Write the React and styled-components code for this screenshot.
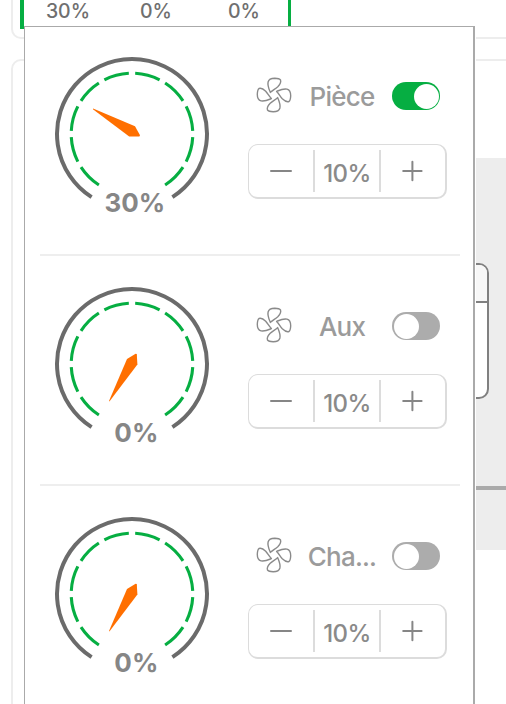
import React, { useState } from "react";
import styled, { createGlobalStyle } from "styled-components";

const GlobalStyle = createGlobalStyle`
  * {
    box-sizing: border-box;
  }

  body {
    margin: 0;
    background: #fff;
    font-family: Inter, "Liberation Sans", sans-serif;
  }
`;

const fans = [
  { name: "Pièce", value: 30, min: 10, on: true },
  { name: "Aux", value: 0, min: 10, on: false },
  { name: "Cha...", value: 0, min: 10, on: false },
];

const needles = {
  0: "-22.6,37.6 5.4,0.4 4.8,-10 3.6,-10.2 -5,-5 -23,37",
  30: "-38.9,-25.4 3,-7.8 8,1.2 7.4,2.6 -2.8,2.6 -39.1,-24.8",
};

const point = (r, deg) => {
  const a = (deg * Math.PI) / 180;
  return `${(r * Math.sin(a)).toFixed(2)} ${(-r * Math.cos(a)).toFixed(2)}`;
};

const arc = (r, from, to) =>
  `M${point(r, from)} A${r} ${r} 0 ${to - from > 180 ? 1 : 0} 1 ${point(r, to)}`;

const segments = [-147, -117, -87, -57, -27, 3, 33, 63, 93, 123];

const Gauge = ({ value }) => (
  <GaugeSvg viewBox="-78 -78 156 164">
    <path d={arc(75, -147.4, 147.4)} stroke="#6b6b6b" strokeWidth="4" />
    {segments.map((deg) => (
      <path key={deg} d={arc(60.8, deg, deg + 24)} stroke="#06ae42" strokeWidth="3.1" />
    ))}
    <polygon points={needles[value]} fill="#ff6f00" />
    <GaugeText x={value ? 2.9 : 4.3} y="77.8">
      {value}%
    </GaugeText>
  </GaugeSvg>
);

const blade = "M-3.6 -2.6 C-4.6 -5 -6.7 -9 -5.9 -13 C-5.2 -15.8 -2.5 -16.7 0.8 -16.7 C3 -16.6 5.8 -16 6.5 -15 C7 -13.6 6.2 -10.8 3.8 -8.3 C1 -5.9 -1.6 -4.8 -3.6 -2.6 Z";

const FanIcon = () => (
  <FanSvg viewBox="-18 -18 36 36">
    {[0, 90, 180, 270].map((deg) => (
      <path key={deg} d={blade} transform={`rotate(${deg})`} />
    ))}
  </FanSvg>
);

const FanRow = ({ fan }) => {
  const [on, setOn] = useState(fan.on);
  const [speed, setSpeed] = useState(fan.min);

  return (
    <Row>
      <Gauge value={fan.value} />
      <Controls>
        <Header>
          <FanIcon />
          <Name>{fan.name}</Name>
          <Toggle $on={on} onClick={() => setOn(!on)}>
            <Knob />
          </Toggle>
        </Header>
        <Stepper>
          <StepButton onClick={() => setSpeed(Math.max(0, speed - 10))}>
            <svg width="24" height="24" viewBox="0 0 24 24">
              <path d="M2 12h20" />
            </svg>
          </StepButton>
          <Speed>{speed}%</Speed>
          <StepButton onClick={() => setSpeed(Math.min(100, speed + 10))}>
            <svg width="24" height="24" viewBox="0 0 24 24">
              <path d="M2.2 12h18.4M11.4 2.8v18.4" />
            </svg>
          </StepButton>
        </Stepper>
      </Controls>
    </Row>
  );
};

const App = () => (
  <Screen>
    <GlobalStyle />
    <TopCard>
      <Summary>
        {fans.map((fan) => (
          <span key={fan.name}>{fan.value}%</span>
        ))}
      </Summary>
    </TopCard>
    <MainCard>
      <Diagram>
        <Device>
          <DeviceHead />
        </Device>
        <Rail />
      </Diagram>
    </MainCard>
    <Popover>
      {fans.map((fan) => (
        <FanRow key={fan.name} fan={fan} />
      ))}
    </Popover>
  </Screen>
);

export default App;

const Screen = styled.div`
  position: relative;
  width: 506px;
  height: 704px;
  overflow: hidden;
  background: #fff;
`;

const TopCard = styled.div`
  width: 620px;
  height: 39px;
  margin-left: 11px;
  padding-left: 7px;
  border: 2px solid #ededed;
  border-top: none;
  border-radius: 0 0 10px 10px;
`;

const Summary = styled.div`
  display: grid;
  grid-template-columns: repeat(3, 88px);
  width: 271px;
  height: 29px;
  border: solid #06ae42;
  border-width: 0 3px 3px 4px;
  color: #6f6f6f;
  font-size: 19.5px;
  font-weight: 500;
  line-height: 23px;
  text-align: center;
`;

const MainCard = styled.div`
  width: 620px;
  height: 720px;
  margin: 20px 0 0 11px;
  padding: 97px 0 0 20px;
  border: 2px solid #ededed;
  border-radius: 10px;
`;

const Diagram = styled.div`
  height: 392px;
  padding-top: 105px;
  background: #ededed;
`;

const Device = styled.div`
  width: 456px;
  height: 136px;
  border: 2px solid #808080;
  border-radius: 10px;
  background: #fff;
  overflow: hidden;
`;

const DeviceHead = styled.div`
  height: 38px;
  border-bottom: 2px solid #808080;
  background: #f7f7f7;
`;

const Rail = styled.div`
  height: 4px;
  margin-top: 87px;
  background: #aaa;
`;

const Popover = styled.div`
  position: absolute;
  top: 26px;
  left: 24px;
  width: 451px;
  height: 740px;
  padding: 29px 13px 0 15px;
  border: solid #aaa;
  border-width: 1px 2px 1px 1px;
  background: #fff;
  box-shadow: 1px 0 0 #fff;
`;

const Row = styled.div`
  display: flex;
  width: 420px;
  height: 200px;
  margin-bottom: 30px;
  padding-left: 14px;
  border-bottom: 2px solid #eee;
`;

const GaugeSvg = styled.svg`
  width: 156px;
  height: 164px;
  fill: none;
`;

const GaugeText = styled.text`
  fill: #868686;
  font-size: 26px;
  font-weight: 700;
  text-anchor: middle;
`;

const Controls = styled.div`
  width: 199px;
  margin-left: 38px;
  padding-top: 20px;
`;

const Header = styled.div`
  display: flex;
  align-items: center;
  height: 40px;
  padding: 0 7px 0 8px;
`;

const FanSvg = styled.svg`
  width: 36px;
  height: 36px;
  margin-top: -2px;
  fill: none;
  stroke: #8a8a8a;
  stroke-width: 1.4;
  stroke-linejoin: round;
`;

const Name = styled.div`
  flex: 1;
  padding-top: 2px;
  color: #9b9b9b;
  font-size: 26px;
  font-weight: 500;
  letter-spacing: -0.8px;
  line-height: 32px;
  text-align: center;
  white-space: nowrap;
`;

const Toggle = styled.div`
  display: flex;
  align-items: center;
  justify-content: ${({ $on }) => ($on ? "flex-end" : "flex-start")};
  width: 48px;
  height: 28px;
  padding: 0 1.5px;
  border-radius: 14px;
  background: ${({ $on }) => ($on ? "#06ae42" : "#acacac")};
  cursor: pointer;
`;

const Knob = styled.div`
  width: 25px;
  height: 25px;
  border-radius: 50%;
  background: #fff;
`;

const Stepper = styled.div`
  display: flex;
  align-items: center;
  width: 199px;
  height: 55px;
  margin-top: 28px;
  border: solid #dcdcdc;
  border-width: 1px 2px 2px 1px;
  border-radius: 10px;
`;

const StepButton = styled.div`
  display: flex;
  flex: 1;
  justify-content: center;
  cursor: pointer;

  svg {
    fill: none;
    stroke: #868686;
    stroke-width: 2;
    stroke-linecap: round;
  }
`;

const Speed = styled.div`
  width: 68px;
  height: 42px;
  border: solid #dcdcdc;
  border-width: 0 2px;
  color: #8a8a8a;
  font-size: 24px;
  font-weight: 500;
  letter-spacing: -0.6px;
  line-height: 47px;
  text-align: center;
`;
